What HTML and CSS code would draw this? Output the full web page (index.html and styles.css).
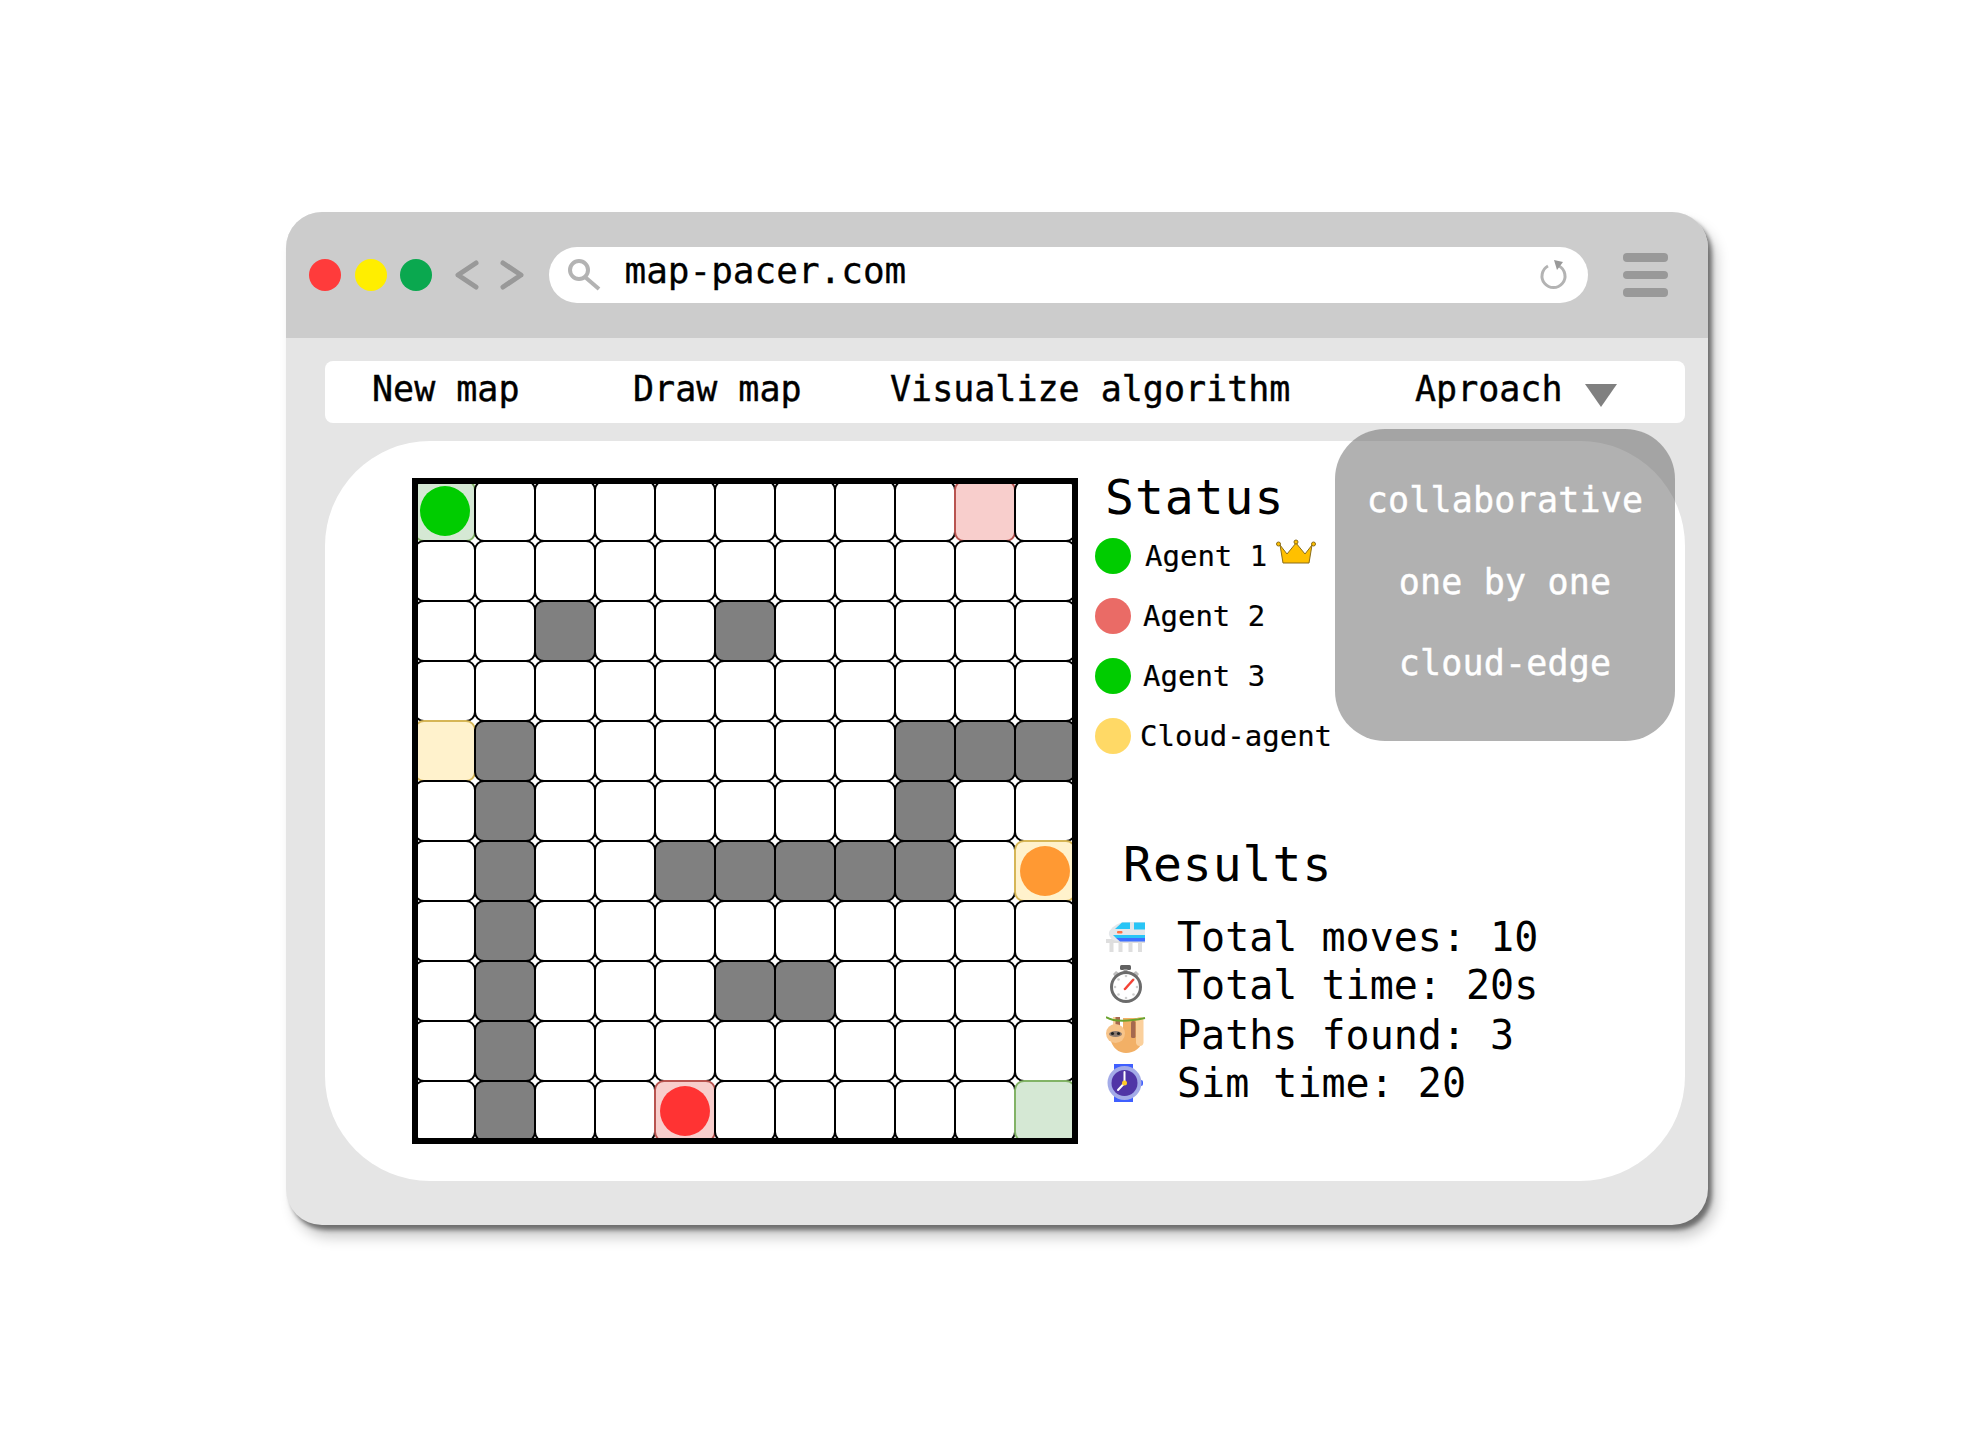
FILE: index.html
```html
<!DOCTYPE html>
<html lang="en">
<head>
    <meta charset="UTF-8">
    <meta name="viewport" content="width=device-width, initial-scale=1.0">
    <title>map-pacer.com</title>
    <link rel="stylesheet" href="styles.css">
</head>
<body>
    <div class="window">
        <div class="titlebar">
            <span class="dot red"></span>
            <span class="dot yellow"></span>
            <span class="dot green"></span>
            <svg class="chevron" width="25" height="30" viewBox="0 0 25 30"><path d="M22 3 L4 15 L22 27" /></svg>
            <svg class="chevron next" width="25" height="30" viewBox="0 0 25 30"><path d="M3 3 L21 15 L3 27" /></svg>
            <div class="urlbar">
                <svg class="search" width="34" height="32" viewBox="0 0 34 32"><circle cx="11" cy="11" r="9" /><path d="M17 18 L31 30" /></svg>
                <span class="url">map-pacer.com</span>
                <svg class="reload" width="30" height="32" viewBox="0 0 30 32"><path d="M20 7 A11.5 11.5 0 1 1 9 7" /><path class="tip" d="M15 1 L24 3 L18 11 Z" /></svg>
            </div>
            <div class="burger"><span></span><span></span><span></span></div>
        </div>

        <div class="nav">
            <span>New map</span>
            <span>Draw map</span>
            <span>Visualize algorithm</span>
            <span class="approach">Aproach <i class="caret"></i></span>
        </div>

        <div class="panel">
            <div class="board">
                <div class="grid">
                    <div class="cell start"><i class="token t-green"></i></div><div class="cell"></div><div class="cell"></div><div class="cell"></div><div class="cell"></div><div class="cell"></div><div class="cell"></div><div class="cell"></div><div class="cell"></div><div class="cell goal-red"></div><div class="cell"></div>
                    <div class="cell"></div><div class="cell"></div><div class="cell"></div><div class="cell"></div><div class="cell"></div><div class="cell"></div><div class="cell"></div><div class="cell"></div><div class="cell"></div><div class="cell"></div><div class="cell"></div>
                    <div class="cell"></div><div class="cell"></div><div class="cell wall"></div><div class="cell"></div><div class="cell"></div><div class="cell wall"></div><div class="cell"></div><div class="cell"></div><div class="cell"></div><div class="cell"></div><div class="cell"></div>
                    <div class="cell"></div><div class="cell"></div><div class="cell"></div><div class="cell"></div><div class="cell"></div><div class="cell"></div><div class="cell"></div><div class="cell"></div><div class="cell"></div><div class="cell"></div><div class="cell"></div>
                    <div class="cell goal-yellow"></div><div class="cell wall"></div><div class="cell"></div><div class="cell"></div><div class="cell"></div><div class="cell"></div><div class="cell"></div><div class="cell"></div><div class="cell wall"></div><div class="cell wall"></div><div class="cell wall"></div>
                    <div class="cell"></div><div class="cell wall"></div><div class="cell"></div><div class="cell"></div><div class="cell"></div><div class="cell"></div><div class="cell"></div><div class="cell"></div><div class="cell wall"></div><div class="cell"></div><div class="cell"></div>
                    <div class="cell"></div><div class="cell wall"></div><div class="cell"></div><div class="cell"></div><div class="cell wall"></div><div class="cell wall"></div><div class="cell wall"></div><div class="cell wall"></div><div class="cell wall"></div><div class="cell"></div><div class="cell goal-yellow"><i class="token t-orange"></i></div>
                    <div class="cell"></div><div class="cell wall"></div><div class="cell"></div><div class="cell"></div><div class="cell"></div><div class="cell"></div><div class="cell"></div><div class="cell"></div><div class="cell"></div><div class="cell"></div><div class="cell"></div>
                    <div class="cell"></div><div class="cell wall"></div><div class="cell"></div><div class="cell"></div><div class="cell"></div><div class="cell wall"></div><div class="cell wall"></div><div class="cell"></div><div class="cell"></div><div class="cell"></div><div class="cell"></div>
                    <div class="cell"></div><div class="cell wall"></div><div class="cell"></div><div class="cell"></div><div class="cell"></div><div class="cell"></div><div class="cell"></div><div class="cell"></div><div class="cell"></div><div class="cell"></div><div class="cell"></div>
                    <div class="cell"></div><div class="cell wall"></div><div class="cell"></div><div class="cell"></div><div class="cell goal-red"><i class="token t-red"></i></div><div class="cell"></div><div class="cell"></div><div class="cell"></div><div class="cell"></div><div class="cell"></div><div class="cell start"></div>
                </div>
            </div>

            <div class="side">
                <h2 class="status-title">Status</h2>
                <div class="agent">
                    <i class="lamp t-green"></i><span class="agent-name first">Agent 1</span>
                    <svg class="crown" width="42" height="26" viewBox="0 0 42 26">
                        <path d="M5 6 L12 15 L21 4 L30 15 L37 6 L34 24 L8 24 Z" fill="#ffc000" stroke="#8a6d1a" stroke-width="1" />
                        <circle cx="3.500" cy="5" r="2" fill="#ffc000" stroke="#8a6d1a" />
                        <circle cx="21" cy="3" r="2" fill="#ffc000" stroke="#8a6d1a" />
                        <circle cx="38.500" cy="5" r="2" fill="#ffc000" stroke="#8a6d1a" />
                    </svg>
                </div>
                <div class="agent"><i class="lamp t-salmon"></i><span class="agent-name">Agent 2</span></div>
                <div class="agent"><i class="lamp t-green"></i><span class="agent-name">Agent 3</span></div>
                <div class="agent"><i class="lamp t-gold"></i><span class="agent-name cloud">Cloud-agent</span></div>

                <h2 class="results-title">Results</h2>
                <div class="result">
                    <svg class="emoji" width="40" height="32" viewBox="0 0 40 32">
                        <rect x="3.500" y="21" width="4" height="10" fill="#dedede" />
                        <rect x="12.500" y="21" width="4" height="10" fill="#dedede" />
                        <rect x="22.500" y="21" width="4" height="10" fill="#dedede" />
                        <rect x="32" y="21" width="4" height="10" fill="#dedede" />
                        <rect x="0" y="18" width="39" height="4" fill="#dedede" />
                        <path d="M3 11 C5 7 11 2 18 1 L39 1 L39 20 L11 20 C7 20 2 16 3 11 Z" fill="#e4e7ea" />
                        <path d="M9 8 L16 1.500 L24 1.500 L24 8 Z" fill="#29c5f6" />
                        <rect x="28" y="1.500" width="11" height="7" fill="#29c5f6" />
                        <path d="M7 14 L39 14 L39 17 L10 17 Z" fill="#29c5f6" />
                        <path d="M10 17 L39 17 L39 20.500 L14 20.500 Z" fill="#3f6fff" />
                        <rect x="11" y="10" width="5.500" height="2.500" rx="1" fill="#ff7043" />
                    </svg>
                    <span>Total moves: 10</span>
                </div>
                <div class="result">
                    <svg class="emoji" width="40" height="40" viewBox="0 0 40 40">
                        <rect x="14" y="0" width="11" height="5" rx="1.500" fill="#616161" />
                        <rect x="17.500" y="4" width="4" height="4" fill="#9e9e9e" />
                        <path d="M7 9 L10 6 L13 8 L9 12 Z" fill="#bdbdbd" />
                        <path d="M33 9 L30 6 L27 8 L31 12 Z" fill="#bdbdbd" />
                        <circle cx="20" cy="22" r="14.500" fill="#fff" stroke="#6b6b6b" stroke-width="3" />
                        <g fill="#cfcfcf">
                            <circle cx="20" cy="11" r="1.300" /><circle cx="20" cy="33" r="1.300" /><circle cx="9" cy="22" r="1.300" /><circle cx="31" cy="22" r="1.300" />
                            <circle cx="12.500" cy="14.500" r="1.300" /><circle cx="27.500" cy="29.500" r="1.300" /><circle cx="12.500" cy="29.500" r="1.300" /><circle cx="27.500" cy="14.500" r="1.300" />
                        </g>
                        <path d="M19 24 L27 15" stroke="#f44336" stroke-width="2.500" stroke-linecap="round" />
                    </svg>
                    <span>Total time: 20s</span>
                </div>
                <div class="result paths">
                    <svg class="emoji" width="40" height="38" viewBox="0 0 40 38">
                        <path d="M4 22 C6 32 13 37 20 37 C28 37 36 32 37 22 L31 2 L17 2 L17 18 Z" fill="#f2b066" />
                        <rect x="30" y="1" width="7.500" height="29" rx="3.700" fill="#fbd09c" />
                        <rect x="25" y="5" width="4.500" height="17" rx="1.500" fill="#a5694f" />
                        <rect x="9" y="1" width="5" height="12" fill="#a5694f" />
                        <rect x="7" y="1" width="2.500" height="10" fill="#fbd09c" />
                        <path d="M0 1 C8 6 20 6 39 2" fill="none" stroke="#6aa32d" stroke-width="2" />
                        <circle cx="9.500" cy="17.500" r="9.500" fill="#f7c48a" />
                        <ellipse cx="9.500" cy="18" rx="6.500" ry="3" fill="#8d7b70" />
                        <circle cx="6.500" cy="17.500" r="1.600" fill="#212121" />
                        <circle cx="12.500" cy="17.500" r="1.600" fill="#212121" />
                    </svg>
                    <span>Paths found: 3</span>
                </div>
                <div class="result">
                    <svg class="emoji" width="40" height="38" viewBox="0 0 40 38">
                        <path d="M8 0 L27 0 L27 38 L8 38 Z" fill="#3f5fff" />
                        <rect x="33" y="16" width="4" height="6" rx="2" fill="#3f5fff" />
                        <circle cx="18.500" cy="19" r="17" fill="#a3abe8" />
                        <circle cx="18.500" cy="19" r="13" fill="#5035a6" />
                        <path d="M18.500 8 L18.500 19 L12 26" fill="none" stroke="#fff" stroke-width="2" stroke-linecap="round" />
                        <circle cx="18.500" cy="19" r="2.500" fill="#ffca28" />
                    </svg>
                    <span>Sim time: 20</span>
                </div>
            </div>
        </div>

        <!-- open dropdown lies over the nav gap and the panel -->
        <div class="dropdown">
            <span>collaborative</span>
            <span>one by one</span>
            <span>cloud-edge</span>
        </div>
    </div>
</body>
</html>
```

FILE: styles.css
```css
* {
    box-sizing: border-box;
}
body {
    min-height: 100vh;
    margin: 0;
    padding: 212px 0 0 286px;
    background-color: #ffffff;
    font-family: "DejaVu Sans Mono", monospace;
    color: #000000;
}
.window {
    position: relative;
    width: 1422px;
    height: 1013px;
    background: #e5e5e5;
    border-radius: 36px;
    box-shadow: 4px 5px 4px rgba(0, 0, 0, 0.45), 8px 12px 14px rgba(0, 0, 0, 0.22);
}
.titlebar {
    display: flex;
    align-items: center;
    height: 126px;
    padding-left: 23px;
    background: #cccccc;
    border-radius: 36px 36px 0 0;
}
.dot {
    width: 32px;
    height: 32px;
    margin-right: 13.5px;
    border-radius: 50%;
}
.red { background: #ff3b3b; }
.yellow { background: #ffee00; }
.green { background: #0aa84f; }
.chevron {
    margin-left: 8px;
    margin-right: 27px;
    fill: none;
    stroke: #999999;
    stroke-width: 5;
    stroke-linecap: round;
    stroke-linejoin: round;
}
.chevron.next {
    margin-left: -6px;
    margin-right: 24px;
}
.urlbar {
    display: flex;
    align-items: center;
    width: 1039px;
    height: 56px;
    padding: 0 19px;
    background: #ffffff;
    border-radius: 28px;
}
.search {
    margin-right: 23px;
    fill: none;
    stroke: #b3b3b3;
    stroke-width: 4;
}
.url {
    flex: 1;
    margin-top: -10px;
    font-size: 36px;
    -webkit-text-stroke: 0.3px #000000;
}
.reload {
    fill: none;
    stroke: #b3b3b3;
    stroke-width: 3;
}
.reload .tip {
    fill: #999999;
    stroke: none;
}
.burger {
    display: flex;
    flex-direction: column;
    gap: 9px;
    width: 45px;
    margin-left: 35px;
}
.burger span {
    height: 8.500px;
    background: #999999;
    border-radius: 4px;
}
.nav {
    display: grid;
    grid-template-columns: 261px 257px 525px auto;
    align-items: center;
    height: 62px;
    margin: 23px 23px 0 39px;
    padding: 0 0 6px 47px;
    background: #ffffff;
    border-radius: 8px;
    font-size: 35px;
    -webkit-text-stroke: 0.4px #000000;
}
.caret {
    display: inline-block;
    width: 0;
    height: 0;
    margin-left: 1px;
    border-left: 16px solid transparent;
    border-right: 16px solid transparent;
    border-top: 23px solid #808080;
    vertical-align: -6px;
}
.panel {
    display: flex;
    height: 740px;
    margin: 18px 23px 0 39px;
    padding: 37px 0 0 87px;
    background: #ffffff;
    border-radius: 105px;
}
.board {
    flex: none;
    width: 666px;
    height: 666px;
    border: 6px solid #000000;
    overflow: hidden;
}
.grid {
    display: grid;
    grid-template-columns: repeat(11, 60px);
    grid-auto-rows: 60px;
    margin: -3px;
}
/* cells overlap by a pixel so the rounded corners leave a small diamond */
.cell {
    display: flex;
    align-items: center;
    justify-content: center;
    margin: -1px;
    border: 2px solid #000000;
    border-radius: 10px;
}
.wall { background: #808080; }
.start { background: #d5e8d4; border-color: #82b366; }
.goal-red { background: #f8cecc; border-color: #b85450; }
.goal-yellow { background: #fff2cc; border-color: #d6b656; }
.token {
    width: 50px;
    height: 50px;
    border-radius: 50%;
}
.t-green { background: #00cc00; }
.t-red { background: #ff3333; }
.t-orange { background: #ff9933; }
.t-salmon { background: #ea6b66; }
.t-gold { background: #ffd966; }
.side {
    margin-left: 17px;
    white-space: nowrap;
}
h2 {
    margin: 0;
    font-size: 48px;
    font-weight: normal;
    letter-spacing: 1px;
}
.status-title {
    height: 38px;
    margin-bottom: 10px;
    padding-left: 10px;
    line-height: 38px;
}
.agent {
    display: flex;
    align-items: center;
    height: 60px;
    font-size: 29px;
    -webkit-text-stroke: 0.2px #000000;
}
.lamp {
    flex: none;
    width: 36px;
    height: 36px;
    border-radius: 50%;
}
.agent-name {
    margin-left: 12px;
}
.agent-name.first {
    margin-left: 14px;
}
.agent-name.cloud {
    margin-left: 9px;
}
.crown {
    margin: -8px 0 0 8px;
}
.results-title {
    height: 56px;
    margin: 70px 0 21px;
    padding-left: 28px;
    line-height: 56px;
}
.result {
    display: flex;
    align-items: center;
    height: 48px;
    padding-left: 11px;
    font-size: 40px;
}
.result.paths {
    margin-top: 2px;
}
.emoji {
    flex: none;
    margin-right: 31px;
}
.dropdown {
    position: absolute;
    left: 1049px;
    top: 217px;
    display: flex;
    flex-direction: column;
    align-items: center;
    gap: 39.5px;
    width: 340px;
    height: 312px;
    padding-top: 50px;
    background: rgba(100, 100, 100, 0.5);
    border-radius: 50px;
    color: #ffffff;
    font-size: 35px;
    letter-spacing: 0.2px;
    line-height: 42px;
    -webkit-text-stroke: 0.4px #ffffff;
}
```
